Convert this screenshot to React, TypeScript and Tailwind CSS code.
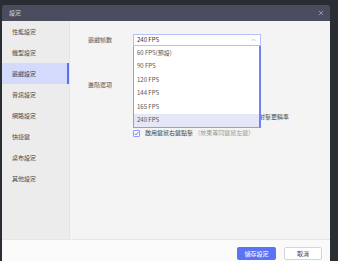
import React from "react";

const font = { fontFamily: '"Noto Sans CJK TC", "Noto Sans", sans-serif' };

function Check({ checked }: { checked?: boolean }) {
  return (
    <span className="relative w-[7px] h-[7px] border border-[#8c9cf5] bg-white rounded-[1px] shrink-0">
      {checked && (
        <svg className="absolute left-0 top-0" width="5" height="5" viewBox="0 0 10 10" overflow="visible">
          <path d="M1.5 5.2 L4 7.8 L9 1.8" stroke="#4e63ee" strokeWidth="1.8" fill="none" />
        </svg>
      )}
    </span>
  );
}

export default function App() {
  const side = ["性能設定", "機型設定", "遊戲設定", "音訊設定", "網路設定", "快捷鍵", "桌布設定", "其他設定"];
  const opts = ["60 FPS(預設)", "90 FPS", "120 FPS", "144 FPS", "165 FPS", "240 FPS"];
  return (
    <div className="w-[338px] h-[261px] overflow-hidden bg-[#2b2d34] pl-[2px] pt-[5px]" style={font}>
      <div className="w-[328px] h-[262px] flex flex-col rounded-t-[3px] overflow-hidden">
        <div className="h-[16px] bg-[#4a4d5e] flex items-center justify-between pl-[7px] pr-[6px] shrink-0">
          <span className="text-[6px] leading-none text-[#d5d6de]">設定</span>
          <svg width="6" height="6" viewBox="0 0 10 10">
            <path d="M1.5 1.5 L8.5 8.5 M8.5 1.5 L1.5 8.5" stroke="#a0a2b0" strokeWidth="1.4" />
          </svg>
        </div>
        <div className="flex h-[218px] shrink-0">
          <div className="w-[68px] bg-[#ececec] flex flex-col border-r border-[#e4e4e4]">
            {side.map((s, i) => (
              <div
                key={s}
                className={
                  "h-[21px] flex items-center pl-[10px] text-[6px] leading-none " +
                  (i === 2 ? "bg-[#d3dafc] border-r-2 border-[#5b6ff2] text-[#3a3d4a]" : "text-[#4a4a4a]")
                }
              >
                {s}
              </div>
            ))}
          </div>
          <div className="flex-1 bg-[#f4f4f4] pl-[18px] pt-[13px] text-[6px] leading-none text-[#555]">
            <div className="flex items-center h-[12px]">
              <span className="w-[45px] text-[#555]">遊戲幀數</span>
              <div className="relative w-[128px] h-[12px]">
                <div className="w-full h-full bg-white border border-[#b4c0fb] flex items-center justify-between pl-[3px] pr-[4px]">
                  <span className="text-[#333]">240 FPS</span>
                  <svg width="5" height="4" viewBox="0 0 10 6">
                    <path d="M1 5 L5 1 L9 5" stroke="#a8a8b0" strokeWidth="1.2" fill="none" />
                  </svg>
                </div>
                <div className="absolute left-0 top-[12px] w-[128px] bg-white border-l border-b border-[#8d9cf6] border-r-2 border-r-[#6f80f5] z-10 flex flex-col">
                  {opts.map((o, i) => (
                    <div
                      key={o}
                      className={
                        "h-[13.5px] flex items-center pl-[3px] text-[#555] " + (i === 5 ? "bg-[#e4e7f6]" : "")
                      }
                    >
                      {o}
                    </div>
                  ))}
                </div>
              </div>
            </div>
            <div className="flex mt-[33px]">
              <span className="w-[45px] h-[12px] flex items-center">進階選項</span>
              <div className="flex flex-col gap-[4px]">
                <div className="h-[12px] flex items-center gap-[5px]">
                  <Check />
                  <span className="text-[#aaa]">開啟高幀率顯示模式（需要裝置效能較高）</span>
                </div>
                <div className="h-[12px]" />
                <div className="h-[12px] flex items-center gap-[5px]">
                  <Check />
                  <span className="text-[#444]">啟用滑鼠精準瞄準模式，開啟後可以讓您的射擊更精準</span>
                </div>
                <div className="h-[12px] flex items-center gap-[5px]">
                  <Check checked />
                  <span className="text-[#444]">
                    啟用鍵鼠右鍵點擊 <span className="text-[#999]">（效果等同鍵鼠左鍵）</span>
                  </span>
                </div>
              </div>
            </div>
          </div>
        </div>
        <div className="flex-1 bg-[#fafafa] border-t border-[#e6e6e6] flex justify-end items-start pt-[7px] pr-[8px] gap-[8px]">
          <button className="w-[39px] h-[13px] bg-[#5a72f4] rounded-[2px] text-white text-[6px] leading-none flex items-center justify-center">
            儲存設定
          </button>
          <button className="w-[38px] h-[13px] bg-white border border-[#d5d5d5] rounded-[2px] text-[#444] text-[6px] leading-none flex items-center justify-center">
            取消
          </button>
        </div>
      </div>
    </div>
  );
}
